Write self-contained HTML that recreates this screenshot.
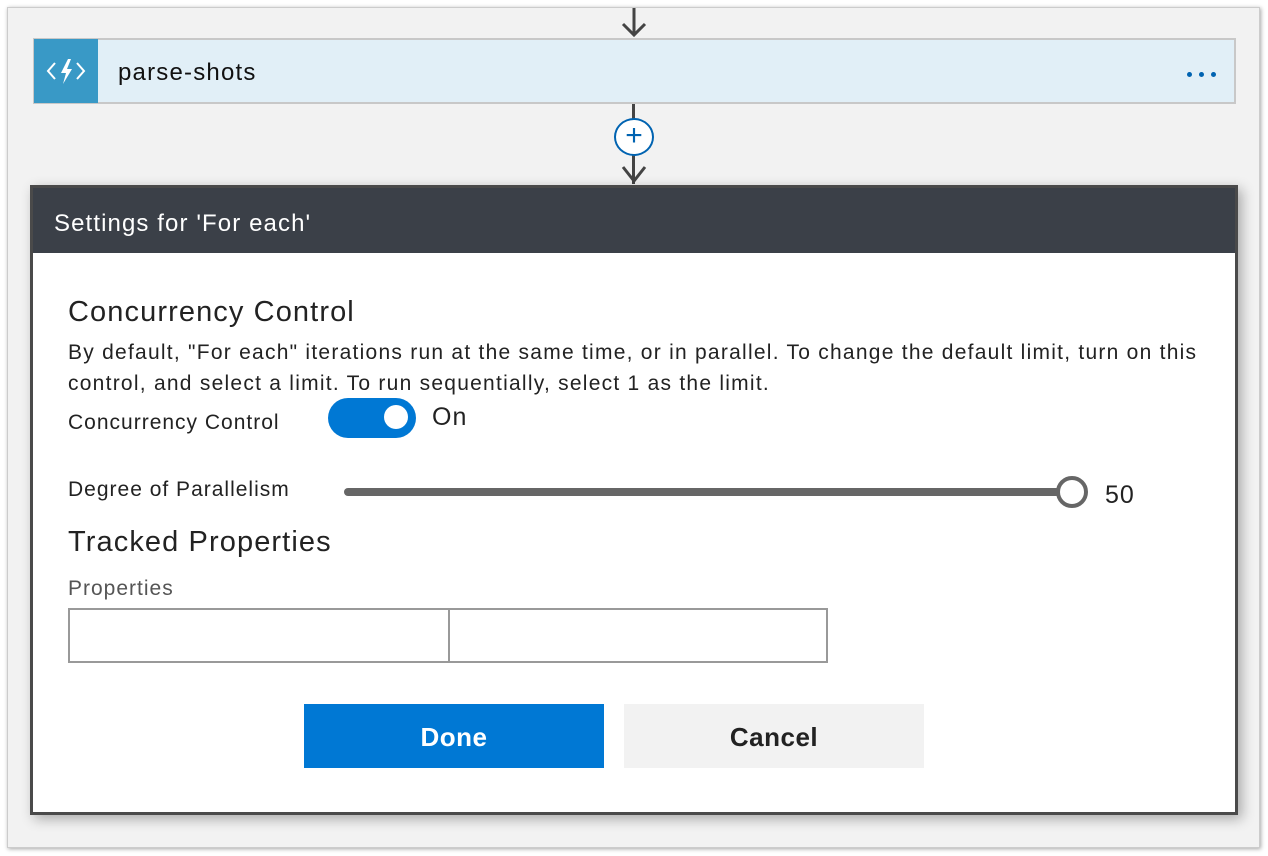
<!DOCTYPE html>
<html><head><style>
*{margin:0;padding:0;box-sizing:border-box}
body{width:1268px;height:856px;background:#fff;position:relative;overflow:hidden;font-family:"Liberation Sans",sans-serif;color:#222}
.outer{position:absolute;left:7px;top:7px;width:1253px;height:841px;background:#f2f2f2;border:1px solid #ccc;box-shadow:1px 1px 4px rgba(0,0,0,.35)}
.abs{position:absolute}
.card{left:33px;top:38px;width:1203px;height:66px;background:#e1eff7;border:2px solid #c8c8c8}
.icon{left:34px;top:39px;width:64px;height:64px;background:#3999c6}
.dlg{left:30px;top:185px;width:1208px;height:630px;border:3px solid #4a4a4a;background:#fff;box-shadow:4px 4px 12px rgba(0,0,0,.3)}
.hdr{left:0;top:0;width:1202px;height:65px;background:#3b4048;color:#fff;font-size:24px;padding:22px 0 0 21px;letter-spacing:1.1px}
.lbl{font-size:21px;letter-spacing:1px}
.h{font-size:29px;letter-spacing:1.1px}
</style></head><body>
<div class="outer"></div>
<svg class="abs" style="left:615px;top:8px" width="40" height="30"><path d="M19 0V27M8 16L19 27L30 16" stroke="#444" stroke-width="3" fill="none"/></svg>
<div class="abs card"></div>
<div class="abs icon"><svg width="64" height="64"><path d="M21 24L14 32L21 40M43 24L50 32L43 40" stroke="#fff" stroke-width="2" fill="none"/><path d="M34 20L27 34H32L29 45L38 30H33L37 20Z" fill="#fff"/></svg></div>
<div class="abs" style="left:118px;top:59px;font-size:24px;color:#111;letter-spacing:1.2px">parse-shots</div>
<div class="abs" style="left:1187px;top:72px;width:5px;height:5px;border-radius:50%;background:#0063b1;box-shadow:12px 0 0 #0063b1,24px 0 0 #0063b1"></div>
<div class="abs" style="left:632px;top:104px;width:3px;height:80px;background:#444"></div>
<svg class="abs" style="left:615px;top:155px" width="40" height="30"><path d="M8 12L19 26L30 12" stroke="#444" stroke-width="3" fill="none"/></svg>
<div class="abs" style="left:614px;top:118px;width:40px;height:38px;border-radius:50%;border:2px solid #0063b1;background:#fff;color:#0063b1;font-size:30px;line-height:32px;text-align:center">+</div>
<div class="abs dlg">
<div class="abs hdr">Settings for 'For each'</div>
<div class="abs h" style="left:35px;top:108px;color:#222">Concurrency Control</div>
<div class="abs lbl" style="left:35px;top:149px;line-height:31px;width:1150px;color:#222;letter-spacing:1.25px">By default, "For each" iterations run at the same time, or in parallel. To change the default limit, turn on this control, and select a limit. To run sequentially, select 1 as the limit.</div>
<div class="abs lbl" style="left:35px;top:223px">Concurrency Control</div>
<div class="abs" style="left:295px;top:210px;width:88px;height:40px;border-radius:20px;background:#0078d4"></div>
<div class="abs" style="left:351px;top:217px;width:24px;height:24px;border-radius:50%;background:#fff"></div>
<div class="abs" style="left:399px;top:215px;font-size:25px;letter-spacing:1px">On</div>
<div class="abs lbl" style="left:35px;top:290px">Degree of Parallelism</div>
<div class="abs" style="left:311px;top:300px;width:724px;height:8px;border-radius:4px;background:#666"></div>
<div class="abs" style="left:1023px;top:288px;width:32px;height:32px;border-radius:50%;border:4px solid #666;background:#fff"></div>
<div class="abs" style="left:1072px;top:293px;font-size:25px;letter-spacing:1px">50</div>
<div class="abs h" style="left:35px;top:338px">Tracked Properties</div>
<div class="abs lbl" style="left:35px;top:389px;color:#555">Properties</div>
<div class="abs" style="left:35px;top:420px;width:382px;height:55px;border:2px solid #999"></div>
<div class="abs" style="left:415px;top:420px;width:380px;height:55px;border:2px solid #999"></div>
<div class="abs" style="left:271px;top:516px;width:300px;height:64px;background:#0078d4;color:#fff;font-size:26px;font-weight:bold;text-align:center;line-height:66px;letter-spacing:.5px">Done</div>
<div class="abs" style="left:591px;top:516px;width:300px;height:64px;background:#f2f2f2;color:#222;font-size:26px;font-weight:bold;text-align:center;line-height:66px;letter-spacing:.5px">Cancel</div>
</div>
</body></html>
